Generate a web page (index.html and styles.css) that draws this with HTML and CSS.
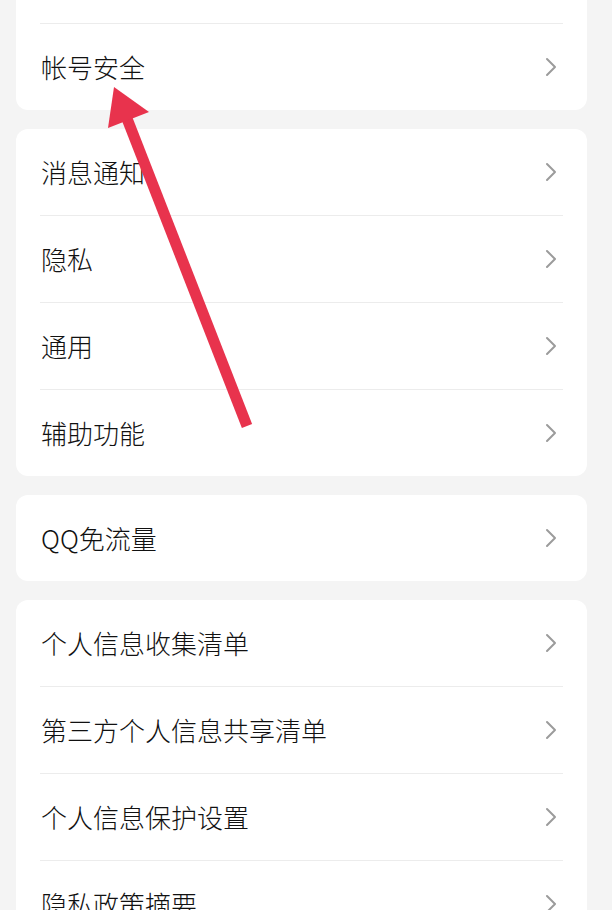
FILE: index.html
```html
<!DOCTYPE html>
<html lang="zh-CN">
<head>
<meta charset="utf-8">
<title>设置</title>
<link rel="stylesheet" href="styles.css">
</head>
<body>
<div class="page">
  <div class="card card-first">
    <div class="row"></div>
    <div class="row"><span class="label">帐号安全</span><svg class="chev" viewBox="0 0 12 20" width="12" height="20"><polyline points="2,2 10,10 2,18"/></svg></div>
  </div>
  <div class="card">
    <div class="row"><span class="label">消息通知</span><svg class="chev" viewBox="0 0 12 20" width="12" height="20"><polyline points="2,2 10,10 2,18"/></svg></div>
    <div class="row"><span class="label">隐私</span><svg class="chev" viewBox="0 0 12 20" width="12" height="20"><polyline points="2,2 10,10 2,18"/></svg></div>
    <div class="row"><span class="label">通用</span><svg class="chev" viewBox="0 0 12 20" width="12" height="20"><polyline points="2,2 10,10 2,18"/></svg></div>
    <div class="row"><span class="label">辅助功能</span><svg class="chev" viewBox="0 0 12 20" width="12" height="20"><polyline points="2,2 10,10 2,18"/></svg></div>
  </div>
  <div class="card">
    <div class="row"><span class="label">QQ免流量</span><svg class="chev" viewBox="0 0 12 20" width="12" height="20"><polyline points="2,2 10,10 2,18"/></svg></div>
  </div>
  <div class="card">
    <div class="row"><span class="label">个人信息收集清单</span><svg class="chev" viewBox="0 0 12 20" width="12" height="20"><polyline points="2,2 10,10 2,18"/></svg></div>
    <div class="row"><span class="label">第三方个人信息共享清单</span><svg class="chev" viewBox="0 0 12 20" width="12" height="20"><polyline points="2,2 10,10 2,18"/></svg></div>
    <div class="row"><span class="label">个人信息保护设置</span><svg class="chev" viewBox="0 0 12 20" width="12" height="20"><polyline points="2,2 10,10 2,18"/></svg></div>
    <div class="row"><span class="label">隐私政策摘要</span><svg class="chev" viewBox="0 0 12 20" width="12" height="20"><polyline points="2,2 10,10 2,18"/></svg></div>
  </div>
</div>
<svg class="arrow" viewBox="0 0 612 910" width="612" height="910">
  <line x1="247" y1="426" x2="126" y2="116"/>
  <polygon points="114,87 108,128 149,112"/>
</svg>
</body>
</html>
```

FILE: styles.css
```css
html, body {
  margin: 0;
  padding: 0;
  background: #f4f4f4;
  overflow: hidden;
}
body {
  width: 612px;
  height: 910px;
  position: relative;
  font-family: "Noto Sans CJK SC", "Noto Sans", sans-serif;
}
.page {
  display: flex;
  flex-direction: column;
  gap: 19px;
}
.card {
  background: #ffffff;
  border-radius: 12px;
  margin: 0 25px 0 16px;
  padding: 0 24px;
  display: flex;
  flex-direction: column;
}
.card-first {
  margin-top: -63px;
}
.row {
  height: 86px;
  display: flex;
  align-items: center;
  justify-content: space-between;
  padding-right: 6px;
  padding-left: 1px;
}
.row + .row {
  border-top: 1px solid #ececec;
}
.label {
  font-size: 26px;
  font-weight: 300;
  color: #111111;
  line-height: 1;
}
.chev {
  fill: none;
  stroke: #9b9b9b;
  stroke-width: 2;
  stroke-linecap: round;
  stroke-linejoin: round;
}
.arrow {
  position: absolute;
  left: 0;
  top: 0;
  pointer-events: none;
}
.arrow line {
  stroke: #e8334d;
  stroke-width: 11;
}
.arrow polygon {
  fill: #e8334d;
}
```
